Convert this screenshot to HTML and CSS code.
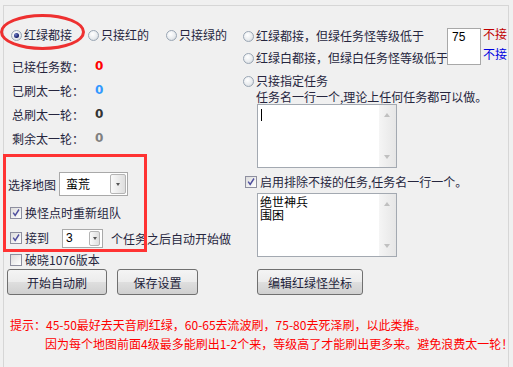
FILE: index.html
```html
<!DOCTYPE html>
<html lang="zh-CN">
<head>
  <meta charset="UTF-8">
  <title>刷太一轮设置</title>
  <link rel="stylesheet" href="styles.css">
</head>
<body>
  <div class="page">
    <div class="main">
      <div class="col-left">
        <div class="mode-row">
          <label class="opt w1"><span class="radio on"></span>红绿都接</label>
          <label class="opt w2"><span class="radio"></span>只接红的</label>
          <label class="opt"><span class="radio"></span>只接绿的</label>
        </div>

        <div class="stats">
          <div class="stat"><span class="stat-name">已接任务数：</span><b class="num red">0</b></div>
          <div class="stat"><span class="stat-name">已刷太一轮：</span><b class="num blue">0</b></div>
          <div class="stat"><span class="stat-name">总刷太一轮：</span><b class="num dark">0</b></div>
          <div class="stat"><span class="stat-name">剩余太一轮：</span><b class="num gray">0</b></div>
        </div>

        <div class="map-row">
          <span>选择地图</span>
          <div class="combo map-combo">蛮荒<span class="drop"></span></div>
        </div>

        <div class="check-row regroup">
          <span class="check on"><svg viewBox="0 0 12 12"><path d="M2.6 5.6 L5 9 L9.6 1.8"/></svg></span>换怪点时重新组队
        </div>

        <div class="check-row count-row">
          <span class="check on"><svg viewBox="0 0 12 12"><path d="M2.6 5.6 L5 9 L9.6 1.8"/></svg></span>接到
          <div class="combo count-combo">3<span class="drop"></span></div>
          <span class="after">个任务之后自动开始做</span>
        </div>

        <div class="check-row version">
          <span class="check"></span>破晓1076版本
        </div>
      </div>

      <div class="col-right">
        <div class="level-block">
          <div class="level-opts">
            <label class="opt first"><span class="radio"></span>红绿都接，但绿任务怪等级低于</label>
            <label class="opt second"><span class="radio"></span>红绿白都接，但绿白任务怪等级低于</label>
          </div>
          <div class="level-box">75</div>
          <div class="skip">
            <span class="skip-red">不接</span>
            <span class="skip-blue">不接</span>
          </div>
        </div>

        <label class="opt only"><span class="radio"></span>只接指定任务</label>
        <div class="note">任务名一行一个,理论上任何任务都可以做。</div>
        <div class="memo"><span class="caret"></span><span class="scroll"><i class="up"></i><i class="down"></i></span></div>

        <div class="check-row exclude">
          <span class="check on"><svg viewBox="0 0 12 12"><path d="M2.6 5.6 L5 9 L9.6 1.8"/></svg></span>启用排除不接的任务,任务名一行一个。
        </div>
        <div class="memo list">绝世神兵<br>围困<span class="scroll"><i class="up"></i><i class="down"></i></span></div>
      </div>
    </div>

    <div class="buttons">
      <button class="btn start">开始自动刷</button>
      <button class="btn save">保存设置</button>
      <button class="btn edit">编辑红绿怪坐标</button>
    </div>

    <div class="hints">
      <p class="hint">提示：45-50最好去天音刷红绿，60-65去流波刷，75-80去死泽刷，以此类推。</p>
      <p class="hint second">因为每个地图前面4级最多能刷出1-2个来，等级高了才能刷出更多来。避免浪费太一轮！</p>
    </div>

    <div class="mark-ellipse"></div>
    <div class="mark-box"></div>
  </div>
</body>
</html>
```

FILE: styles.css
```css
body {
  margin: 0;
  background: #f0f0f0;
  font-family: "Noto Sans CJK SC", "Noto Sans", sans-serif;
  font-size: 12px;
  color: #26263e;
  overflow: hidden;
}
.page {
  position: relative;
  margin: 5px 0 0 3px;
  width: 506px;
  height: 380px;
  box-sizing: border-box;
  border: 1px solid #d6d6d6;
  border-bottom: none;
  background: #f0f0f0;
}
.main {
  display: flex;
  height: 260px;
}
.col-left {
  width: 239px;
  padding-top: 22px;
}
.col-right {
  flex: 1;
  padding-top: 22px;
}

/* radio buttons */
.opt {
  display: flex;
  align-items: center;
  gap: 2px;
  height: 14px;
  line-height: 14px;
  white-space: nowrap;
}
.radio {
  width: 11px;
  height: 11px;
  box-sizing: border-box;
  border-radius: 50%;
  border: 1px solid #9aa6b4;
  background: radial-gradient(circle at 40% 35%, #ffffff 0%, #e9ecef 55%, #c9ced4 100%);
  position: relative;
  flex: none;
}
.radio.on::after {
  content: "";
  position: absolute;
  left: 2px;
  top: 2px;
  width: 5px;
  height: 5px;
  border-radius: 50%;
  background: radial-gradient(circle at 35% 35%, #6f7fc8 0%, #1c2470 60%, #0e1448 100%);
}
.mode-row {
  display: flex;
  padding-left: 7px;
}
.mode-row .w1 { width: 77px; }
.mode-row .w2 { width: 78px; }

/* counters */
.stats {
  margin-top: 12px;
  padding-left: 8px;
}
.stat {
  display: flex;
  height: 24px;
  align-items: center;
}
.stat-name {
  width: 83px;
}
.num {
  font-family: "DejaVu Sans", sans-serif;
  font-size: 12px;
}
.num.red { color: #ff0000; }
.num.blue { color: #3399ff; }
.num.dark { color: #333333; }
.num.gray { color: #808080; }

/* map select */
.map-row {
  display: flex;
  align-items: center;
  gap: 3px;
  margin-top: 22px;
  padding-left: 4px;
  height: 24px;
}
.combo {
  position: relative;
  box-sizing: border-box;
  background: #fff;
  border: 1px solid #a9a9a9;
  color: #000;
}
.map-combo {
  width: 69px;
  height: 24px;
  line-height: 22px;
  padding-left: 6px;
}
.count-combo {
  width: 41px;
  height: 19px;
  line-height: 17px;
  padding-left: 3px;
  margin-left: 10px;
  font-family: "Liberation Sans", sans-serif;
}
.drop {
  position: absolute;
  top: 1px;
  right: 1px;
  bottom: 1px;
  width: 16px;
  box-sizing: border-box;
  border: 1px solid #b4b4b4;
  border-radius: 2px;
  background: linear-gradient(to right, #fafafa, #dedede);
}
.count-combo .drop {
  width: 11px;
  right: 2px;
}
.drop::after {
  content: "";
  position: absolute;
  left: 50%;
  top: 50%;
  margin: -1px 0 0 -2px;
  border-left: 2px solid transparent;
  border-right: 2px solid transparent;
  border-top: 3px solid #555;
}

/* checkboxes */
.check-row {
  display: flex;
  align-items: center;
  gap: 3px;
  height: 14px;
  line-height: 14px;
  white-space: nowrap;
}
.check {
  width: 12px;
  height: 12px;
  box-sizing: border-box;
  border: 1px solid #8e8f9f;
  background: linear-gradient(135deg, #dcdcdc, #ffffff);
  flex: none;
}
.check svg {
  display: block;
  width: 10px;
  height: 10px;
}
.check path {
  fill: none;
  stroke: #4f4f9e;
  stroke-width: 1.7;
}
.regroup {
  margin-top: 9px;
  height: 16px;
  padding-left: 6px;
}
.count-row {
  margin-top: 7px;
  height: 20px;
  padding-left: 6px;
}
.count-row .after {
  margin-left: 5px;
  padding-top: 2px;
}
.version {
  margin-top: 5px;
  padding-left: 6px;
}

/* right column */
.level-block {
  display: flex;
  height: 37px;
}
.level-opts {
  width: 204px;
}
.level-opts .first { margin-top: 1px; }
.level-opts .second { margin-top: 8px; }
.level-box {
  width: 34px;
  height: 37px;
  box-sizing: border-box;
  border: 1px solid #a8a8a8;
  background: #fff;
  color: #000;
  padding: 1px 0 0 4px;
  line-height: 14px;
  font-family: "Liberation Sans", sans-serif;
}
.skip {
  display: flex;
  flex-direction: column;
  margin-left: 2px;
  line-height: 12px;
}
.skip-red { color: #c00000; }
.skip-blue { color: #0000e0; margin-top: 8px; }

.only {
  margin-top: 9px;
}
.note {
  margin: 2px 0 0 13px;
  height: 14px;
  line-height: 14px;
  white-space: nowrap;
}
.memo {
  position: relative;
  margin: 0 0 0 14px;
  width: 140px;
  height: 64px;
  box-sizing: border-box;
  border: 1px solid #a3a9b1;
  background: #fff;
  color: #000;
  padding: 1px 2px;
  line-height: 13px;
}
.caret {
  display: block;
  margin: 3px 0 0 1px;
  width: 1px;
  height: 12px;
  background: #000;
}
.scroll {
  position: absolute;
  top: 0;
  right: 0;
  bottom: 0;
  width: 17px;
  background: linear-gradient(to right, #f5f5f5, #e6e6e6);
}
.scroll i {
  position: absolute;
  left: 5px;
  border-left: 3px solid transparent;
  border-right: 3px solid transparent;
}
.scroll .up {
  top: 8px;
  border-bottom: 4px solid #c0c0c0;
}
.scroll .down {
  bottom: 8px;
  border-top: 4px solid #c0c0c0;
}
.exclude {
  margin: 7px 0 0 2px;
}
.memo.list {
  margin-top: 4px;
}

/* buttons */
.buttons {
  display: flex;
  margin-top: 3px;
  padding-left: 3px;
}
.btn {
  height: 26px;
  padding: 0;
  border: 1px solid #707070;
  border-radius: 3px;
  background: linear-gradient(#f4f4f4, #ececec 48%, #dedede 52%, #d0d0d0);
  font-family: "Noto Sans CJK SC", sans-serif;
  font-size: 12px;
  color: #1e1e3a;
}
.btn.start { width: 100px; }
.btn.save { width: 81px; margin-left: 10px; }
.btn.edit { width: 106px; margin-left: 59px; }

/* hints */
.hints {
  margin-top: 23px;
}
.hint {
  margin: 0;
  padding-left: 6px;
  height: 14px;
  line-height: 14px;
  color: #ff0000;
  white-space: nowrap;
}
.hint.second {
  margin-top: 5px;
  padding-left: 41px;
}

/* red annotations drawn over the form */
.mark-ellipse {
  position: absolute;
  left: -4px;
  top: 8px;
  width: 85px;
  height: 36px;
  box-sizing: border-box;
  border: 3px solid #ee3030;
  border-radius: 50%;
}
.mark-box {
  position: absolute;
  left: -1px;
  top: 148px;
  width: 144px;
  height: 98px;
  box-sizing: border-box;
  border: 3px solid #ff3333;
}
```
